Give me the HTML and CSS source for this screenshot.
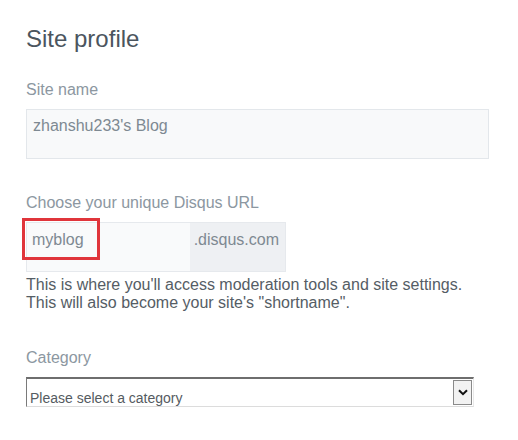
FILE: index.html
```html
<!DOCTYPE html>
<html>
<head>
<meta charset="utf-8">
<link rel="stylesheet" href="styles.css">
</head>
<body>
<div class="page">
  <h1 class="title">Site profile</h1>

  <div class="field">
    <label class="label">Site name</label>
    <div class="input input-name">zhanshu233's Blog</div>
  </div>

  <div class="field field-url">
    <label class="label">Choose your unique Disqus URL</label>
    <div class="url-group">
      <div class="url-input"><span class="highlight">myblog</span></div>
      <div class="url-suffix">.disqus.com</div>
    </div>
    <p class="help">This is where you'll access moderation tools and site settings.<br>This will also become your site's "shortname".</p>
  </div>

  <div class="field field-cat">
    <label class="label">Category</label>
    <div class="select">
      <span class="select-text">Please select a category</span>
      <span class="select-btn">
        <svg width="10" height="7" viewBox="0 0 10 7"><path d="M1 1.2 L5 5.2 L9 1.2" fill="none" stroke="#111" stroke-width="2"/></svg>
      </span>
    </div>
  </div>
</div>
</body>
</html>
```

FILE: styles.css
```css
html, body {
  margin: 0;
  padding: 0;
  background: #ffffff;
}
body {
  font-family: "Liberation Sans", Arial, sans-serif;
}
.page {
  padding: 26px 29px 0 26px;
}
.title {
  margin: 0;
  font-size: 24px;
  font-weight: normal;
  color: #4b555e;
  line-height: 26px;
}
.field {
  margin-top: 29px;
}
.label {
  display: block;
  font-size: 16px;
  line-height: 18px;
  color: #8c97a1;
}
.input {
  margin-top: 10px;
  border: 1px solid #e3e7eb;
  background: #f8f9fa;
  font-size: 16px;
  color: #7e8992;
  padding: 7px 6px 0 6px;
  box-sizing: border-box;
  height: 50px;
  line-height: 18px;
}
.field-url {
  margin-top: 35px;
}
.url-group {
  margin-top: 10px;
  width: 260px;
  height: 50px;
  display: flex;
  border: 1px solid #e6e9ed;
  box-sizing: border-box;
}
.url-input {
  flex: 0 0 163px;
  background: #f9fafb;
  position: relative;
}
.highlight {
  position: absolute;
  left: -5px;
  top: -5px;
  width: 78px;
  height: 42px;
  box-sizing: border-box;
  border: 3px solid #e0353b;
  font-size: 16px;
  color: #7e8992;
  line-height: 18px;
  padding: 10px 0 0 7px;
}
.url-suffix {
  flex: 1;
  background: #eef0f3;
  font-size: 16px;
  color: #7e8992;
  text-align: right;
  padding: 8px 6px 0 0;
  line-height: 18px;
}
.help {
  margin: 4px 0 0 0;
  font-size: 16px;
  line-height: 18px;
  color: #555d65;
}
.field-cat {
  margin-top: 37px;
}
.select {
  margin-top: 10px;
  width: 448px;
  height: 30px;
  box-sizing: border-box;
  border-top: 2px solid #6e6e6e;
  border-left: 1px solid #7a7a7a;
  border-bottom: 1px solid #dcdcdc;
  border-right: 1px solid #e8e8e8;
  display: flex;
  align-items: flex-end;
  justify-content: space-between;
}
.select-text {
  font-size: 14px;
  line-height: 16px;
  color: #555b61;
  padding: 0 0 0 3px;
}
.select-btn {
  align-self: stretch;
  width: 17px;
  margin: 1px 1px 1px 0;
  border: 1px solid #8a8a8a;
  background: #f2f2f2;
  display: flex;
  align-items: center;
  justify-content: center;
}
```
